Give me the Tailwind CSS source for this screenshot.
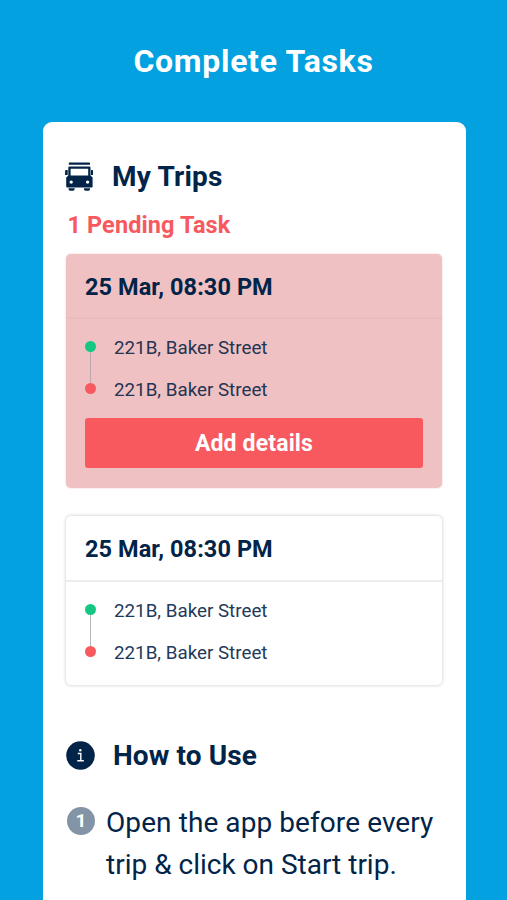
<!DOCTYPE html>
<html lang="en">
<head>
<meta charset="utf-8">
<title>Complete Tasks</title>
<script src="https://cdn.jsdelivr.net/npm/@tailwindcss/browser@4"></script>
</head>
<body class="h-[900px] overflow-hidden bg-[#03a1df] font-[Roboto,sans-serif] text-[#022448]">
<h1 class="h-[122px] text-center text-[32px] leading-[123px] font-bold tracking-[0.7px] text-white">Complete Tasks</h1>
<main class="ml-[43px] h-[790px] w-[422.5px] rounded-t-[9px] bg-white px-[23px] pt-[34px]">
  <div class="flex h-[41px] items-center">
    <svg class="-ml-[1px] h-[30px] w-[28px]" viewBox="0 0 28 30" fill="#022448">
      <rect x="3.800" y="0.500" width="21.200" height="2.300" rx=".6"/>
      <path fill-rule="evenodd" d="M4.400 4.500h20q1.100 0 1.100 1.100V13.500l2.100 2v9q0 1-1 1H2.200q-1 0-1-1v-9l2.100-2V5.600Q3.300 4.500 4.400 4.500ZM5.600 6.700v6.800h17.600v-6.800ZM6.200 18.400a1.700 1.700 0 1 0 0 3.400a1.700 1.700 0 0 0 0-3.400ZM22.600 18.400a1.700 1.700 0 1 0 0 3.400a1.700 1.700 0 0 0 0-3.400Z"/>
      <path d="M.1 8.800q0-.8 1-.8h1.600V13H.1zM26 8h1.200q.8 0 .8.800V13h-2zM3.500 26.300h6.200v.7q-.4 1.700-1.500 1.700H5q-1.300 0-1.500-1.700zM18.900 26.300h6.200v.7q-.4 1.700-1.500 1.700h-3.200q-1.300 0-1.500-1.700z"/>
    </svg>
    <h2 class="ml-[19px] text-[28px] leading-[40px] font-bold tracking-[0.2px]">My Trips</h2>
  </div>
  <p class="ml-[1.5px] h-[56.500px] text-[23.500px] leading-[57px] font-bold tracking-[0.1px] text-[#f8595e]">1 Pending Task</p>
  <section class="h-[234.500px] w-[376px] rounded-[5px] bg-[#efc1c2] shadow-[0_0_2px_#efc1c2]">
    <h3 class="h-[65.500px] border-b-2 border-[#e9bbbd] pl-[19px] text-[23.500px] leading-[67px] font-bold tracking-[0.080px]">25 Mar, 08:30 PM</h3>
    <div class="flex px-[19px] pt-[8px] text-[18.800px] leading-[42px] text-[#243453]">
      <div class="flex w-[11px] flex-col items-center pt-[13.500px]">
        <span class="size-[11px] rounded-full bg-[#16c784]"></span>
        <span class="h-[31px] w-px bg-[#b9a8ae]"></span>
        <span class="size-[11px] rounded-full bg-[#f8595e]"></span>
      </div>
      <div class="ml-[18px]"><p>221B, Baker Street</p><p>221B, Baker Street</p></div>
    </div>
    <button class="mx-[19px] mt-[7px] block h-[50px] w-[338px] rounded-[3px] bg-[#f8595e] pt-[2px] text-[23px] font-bold tracking-[0.15px] text-white">Add details</button>
  </section>
  <section class="mt-[28px] h-[169px] w-[376px] rounded-[5px] bg-white shadow-[0_0_3px_1px_#dedede]">
    <h3 class="h-[66px] border-b-2 border-[#ededed] pl-[19px] text-[23.500px] leading-[67px] font-bold tracking-[0.080px]">25 Mar, 08:30 PM</h3>
    <div class="flex px-[19px] pt-[8px] text-[18.800px] leading-[42px] text-[#1f3a5a]">
      <div class="flex w-[11px] flex-col items-center pt-[14px]">
        <span class="size-[11px] rounded-full bg-[#16c784]"></span>
        <span class="h-[31px] w-px bg-[#b4bac0]"></span>
        <span class="size-[11px] rounded-full bg-[#f8595e]"></span>
      </div>
      <div class="ml-[18px]"><p>221B, Baker Street</p><p>221B, Baker Street</p></div>
    </div>
  </section>
  <div class="mt-[50px] flex h-[41px] items-center">
    <svg class="size-[29px]" viewBox="0 0 29 29"><circle cx="14.500" cy="14.500" r="14.300" fill="#022448"/><path d="M11.800 12.500h3v7.300M11.300 19.800h6.500" fill="none" stroke="#fff" stroke-width="1.400"/><circle cx="14.300" cy="9.300" r="1.200" fill="#fff"/></svg>
    <h2 class="ml-[18px] text-[28px] leading-[40px] font-bold tracking-[0.1px]">How to Use</h2>
  </div>
  <div class="mt-[26px] flex">
    <span class="mt-[5px] ml-[1px] size-[28px] rounded-full bg-[#8294a6] text-center text-[19px] leading-[28px] font-bold text-white">1</span>
    <p class="ml-[11px] text-[28px] leading-[42px] whitespace-nowrap"><span class="tracking-[0.080px]">Open the app before every</span><br>trip &amp; click on Start trip.</p>
  </div>
</main>
</body>
</html>
